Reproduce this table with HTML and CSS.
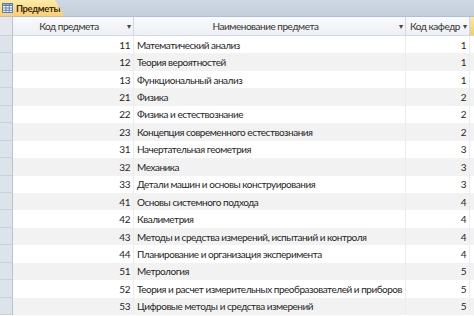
FILE: index.html
```html
<!DOCTYPE html>
<html lang="ru">
<head>
<meta charset="utf-8">
<link rel="stylesheet" href="styles.css">
</head>
<body>
<div class="window">
  <div class="tabbar">
    <div class="tab">
      <svg class="tab-icon" width="11" height="10" viewBox="0 0 11 10">
        <rect x="0.5" y="0.5" width="10" height="9" fill="#fff" stroke="#5a7fb8"/>
        <rect x="0.5" y="0.5" width="10" height="2" fill="#8fb0e0" stroke="#5a7fb8"/>
        <line x1="0.5" y1="5" x2="10.5" y2="5" stroke="#5a7fb8"/>
        <line x1="0.5" y1="7.3" x2="10.5" y2="7.3" stroke="#5a7fb8"/>
        <line x1="4" y1="0.5" x2="4" y2="9.5" stroke="#5a7fb8"/>
        <line x1="7.2" y1="0.5" x2="7.2" y2="9.5" stroke="#5a7fb8"/>
      </svg>
      <span class="tab-label">Предметы</span>
    </div>
  </div>
  <div class="grid">
    <div class="hdr sel"></div>
    <div class="hdr c1"><span class="hdr-text">Код предмета</span><span class="arrow">▾</span></div>
    <div class="hdr c2"><span class="hdr-text">Наименование предмета</span><span class="arrow">▾</span></div>
    <div class="hdr c3"><span class="hdr-text">Код кафедр</span><span class="arrow">▾</span></div>
    <div class="hdr c4"></div>

    <div class="sel"></div><div class="cell num">11</div><div class="cell name">Математический анализ</div><div class="cell num k">1</div><div class="cell extra"></div>
    <div class="sel"></div><div class="cell num alt">12</div><div class="cell name alt">Теория вероятностей</div><div class="cell num k alt">1</div><div class="cell extra alt"></div>
    <div class="sel"></div><div class="cell num">13</div><div class="cell name">Функциональный анализ</div><div class="cell num k">1</div><div class="cell extra"></div>
    <div class="sel"></div><div class="cell num alt">21</div><div class="cell name alt">Физика</div><div class="cell num k alt">2</div><div class="cell extra alt"></div>
    <div class="sel"></div><div class="cell num">22</div><div class="cell name">Физика и естествознание</div><div class="cell num k">2</div><div class="cell extra"></div>
    <div class="sel"></div><div class="cell num alt">23</div><div class="cell name alt">Концепция современного естествознания</div><div class="cell num k alt">2</div><div class="cell extra alt"></div>
    <div class="sel"></div><div class="cell num">31</div><div class="cell name">Начертательная геометрия</div><div class="cell num k">3</div><div class="cell extra"></div>
    <div class="sel"></div><div class="cell num alt">32</div><div class="cell name alt">Механика</div><div class="cell num k alt">3</div><div class="cell extra alt"></div>
    <div class="sel"></div><div class="cell num">33</div><div class="cell name">Детали машин и основы конструирования</div><div class="cell num k">3</div><div class="cell extra"></div>
    <div class="sel"></div><div class="cell num alt">41</div><div class="cell name alt">Основы системного подхода</div><div class="cell num k alt">4</div><div class="cell extra alt"></div>
    <div class="sel"></div><div class="cell num">42</div><div class="cell name">Квалиметрия</div><div class="cell num k">4</div><div class="cell extra"></div>
    <div class="sel"></div><div class="cell num alt">43</div><div class="cell name alt">Методы и средства измерений, испытаний и контроля</div><div class="cell num k alt">4</div><div class="cell extra alt"></div>
    <div class="sel"></div><div class="cell num">44</div><div class="cell name">Планирование и организация эксперимента</div><div class="cell num k">4</div><div class="cell extra"></div>
    <div class="sel"></div><div class="cell num alt">51</div><div class="cell name alt">Метрология</div><div class="cell num k alt">5</div><div class="cell extra alt"></div>
    <div class="sel"></div><div class="cell num">52</div><div class="cell name">Теория и расчет измерительных преобразователей и приборов</div><div class="cell num k">5</div><div class="cell extra"></div>
    <div class="sel"></div><div class="cell num alt">53</div><div class="cell name alt">Цифровые методы и средства измерений</div><div class="cell num k alt">5</div><div class="cell extra alt"></div>
  </div>
</div>
</body>
</html>
```

FILE: styles.css
```css
html, body {
  margin: 0;
  padding: 0;
  background: #ffffff;
}
body {
  width: 474px;
  height: 316px;
  overflow: hidden;
  font-family: Lato, "Liberation Sans", sans-serif;
  font-size: 10px;
  letter-spacing: -0.48px;
  color: #262626;
}
.window {
  width: 474px;
  height: 316px;
  overflow: hidden;
}
.tabbar {
  height: 17px;
  background: linear-gradient(#ced7e4, #c4cedc);
  display: flex;
  align-items: flex-end;
  box-sizing: border-box;
  border-bottom: 1px solid #b3bfcf;
}
.tab {
  height: 16px;
  width: 64px;
  display: flex;
  align-items: center;
  gap: 3px;
  padding-left: 2px;
  box-sizing: border-box;
  background: linear-gradient(#fdeaa9, #f9cf72);
  clip-path: polygon(0 0, 55px 0, 64px 100%, 0 100%);
}
.tab-icon {
  flex: none;
}
.tab-label {
  font-weight: bold;
  font-size: 9.5px;
  color: #3a2c10;
  letter-spacing: -0.4px;
}
.grid {
  display: grid;
  grid-template-columns: 13px 121px 272px 64px 1fr;
  grid-template-rows: 19px;
  grid-auto-rows: 17.45px;
}
.hdr {
  background: linear-gradient(#f9fafc, #edf0f4);
  border-right: 1px solid #d3d8e0;
  border-bottom: 1px solid #d3d8e0;
  box-sizing: border-box;
  display: flex;
  align-items: center;
  color: #333;
}
.hdr-text {
  flex: 1;
  text-align: center;
  white-space: nowrap;
}
.c3 .hdr-text {
  text-align: left;
  padding-left: 4px;
}
.arrow {
  font-size: 8px;
  color: #444;
  width: 8px;
  text-align: center;
  flex: none;
}
.hdr.c4 {
  background: linear-gradient(#fde8a0, #f7cd5e);
  border-right: none;
}
.sel {
  background: #dde3eb;
  border-right: 1px solid #b9c3d1;
  border-bottom: 1px solid #c8d0db;
  box-sizing: border-box;
}
.hdr.sel {
  background: #e4e8ee;
}
.cell {
  display: flex;
  align-items: center;
  white-space: nowrap;
  overflow: hidden;
  border-right: 1px solid #ececec;
  box-sizing: border-box;
  background: #ffffff;
}
.cell.alt {
  background: #f2f2f2;
}
.num {
  justify-content: flex-end;
  padding-right: 3px;
}
.name {
  padding-left: 3px;
}
.extra {
  border-right: none;
}
```
